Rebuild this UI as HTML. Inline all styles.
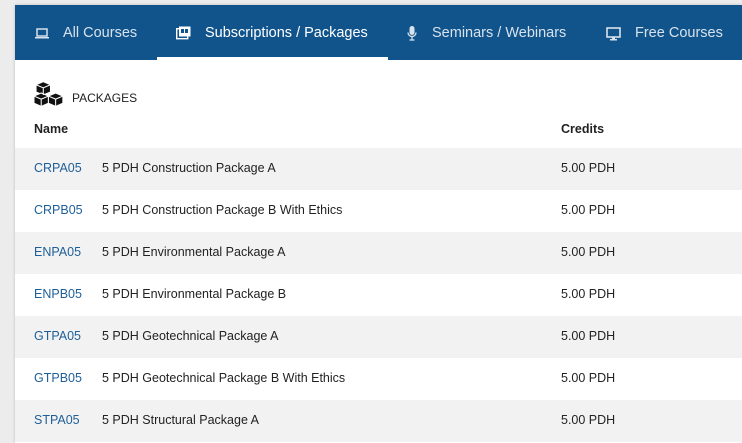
<!DOCTYPE html>
<html><head><style>
body{margin:0;width:742px;height:443px;overflow:hidden;background:#ececec;font-family:"Liberation Sans",sans-serif;position:relative}
.panel{position:absolute;left:15px;top:5px;right:0;bottom:0;background:#fff;box-shadow:0 0 3px rgba(0,0,0,.2)}
.nav{height:55px;background:#11548c;position:relative;color:#fff;font-size:14.5px}
.nav .t{position:absolute;top:20px;white-space:nowrap}
.nav .t.dim{color:#d8e2ec}
.ul{position:absolute;left:142px;width:231px;top:52px;height:3px;background:#fff}
.ph{position:absolute;font-size:12px;color:#222}
.hd{position:absolute;top:117px;font-size:12.5px;font-weight:bold;color:#222}
.row{position:absolute;left:0;right:0;height:42px;font-size:12.5px;color:#222}
.row span{position:absolute;top:13px}
.row .c{left:19px;color:#1f5f99}
.row .n{left:87px}
.row .k{left:546px}
.g{background:#f2f2f2}
</style></head><body>
<div class="panel">
<div class="nav">
<svg style="position:absolute;left:20px;top:23px" width="14" height="11" viewBox="0 0 14 11"><rect x="2" y="1" width="10" height="7" fill="none" stroke="#d8e2ec" stroke-width="1.5"/><rect x="0" y="9" width="14" height="1.5" fill="#d8e2ec"/></svg>
<span class="t dim" style="left:48px">All Courses</span>
<svg style="position:absolute;left:161px;top:21px" width="15" height="14" viewBox="0 0 15 14"><rect x="0.7" y="2.7" width="11" height="10" fill="none" stroke="#fff" stroke-width="1.4"/><rect x="3" y="0.5" width="11.5" height="10" fill="#fff"/><rect x="5" y="3" width="3" height="4" fill="#11548c"/><rect x="9" y="3" width="3" height="4" fill="#11548c"/></svg>
<span class="t" style="left:190px">Subscriptions / Packages</span>
<div class="ul"></div>
<svg style="position:absolute;left:392px;top:21px" width="10" height="15" viewBox="0 0 10 15"><rect x="2.5" y="0" width="5" height="9" rx="2.5" fill="#d8e2ec"/><path d="M1 6.5a4 4 0 0 0 8 0M5 10.5v3M2.5 14h5" stroke="#d8e2ec" stroke-width="1.3" fill="none"/></svg>
<span class="t dim" style="left:417px">Seminars / Webinars</span>
<svg style="position:absolute;left:591px;top:22px" width="15" height="14" viewBox="0 0 15 14"><rect x="1" y="1" width="13" height="9" fill="none" stroke="#d8e2ec" stroke-width="1.6"/><rect x="6" y="10" width="3" height="2" fill="#d8e2ec"/><rect x="4" y="12" width="7" height="1.5" fill="#d8e2ec"/></svg>
<span class="t dim" style="left:620px">Free Courses</span>
</div>
<svg style="position:absolute;left:19px;top:75px" width="34" height="28" viewBox="0 0 33 26"><g fill="#111" stroke="#fff" stroke-width="1"><path d="M9 1l7 3v7l-7 3-7-3V4z"/><path d="M7 12l7 3v7l-7 3-7-3v-7z"/><path d="M21 12l7 3v7l-7 3-7-3v-7z"/></g><g stroke="#fff" stroke-width="1" fill="none"><path d="M2 4l7 3 7-3M9 7v7M0 15l7 3 7-3M7 18v7M14 15l7 3 7-3M21 18v7"/></g></svg>
<div class="ph" style="left:57px;top:86px">PACKAGES</div>
<div class="hd" style="left:19px">Name</div>
<div class="hd" style="left:546px">Credits</div>
<div class="row g" style="top:143px"><span class="c">CRPA05</span><span class="n">5 PDH Construction Package A</span><span class="k">5.00 PDH</span></div>
<div class="row" style="top:185px"><span class="c">CRPB05</span><span class="n">5 PDH Construction Package B With Ethics</span><span class="k">5.00 PDH</span></div>
<div class="row g" style="top:227px"><span class="c">ENPA05</span><span class="n">5 PDH Environmental Package A</span><span class="k">5.00 PDH</span></div>
<div class="row" style="top:269px"><span class="c">ENPB05</span><span class="n">5 PDH Environmental Package B</span><span class="k">5.00 PDH</span></div>
<div class="row g" style="top:311px"><span class="c">GTPA05</span><span class="n">5 PDH Geotechnical Package A</span><span class="k">5.00 PDH</span></div>
<div class="row" style="top:353px"><span class="c">GTPB05</span><span class="n">5 PDH Geotechnical Package B With Ethics</span><span class="k">5.00 PDH</span></div>
<div class="row g" style="top:395px"><span class="c">STPA05</span><span class="n">5 PDH Structural Package A</span><span class="k">5.00 PDH</span></div>
</div>
</body></html>
